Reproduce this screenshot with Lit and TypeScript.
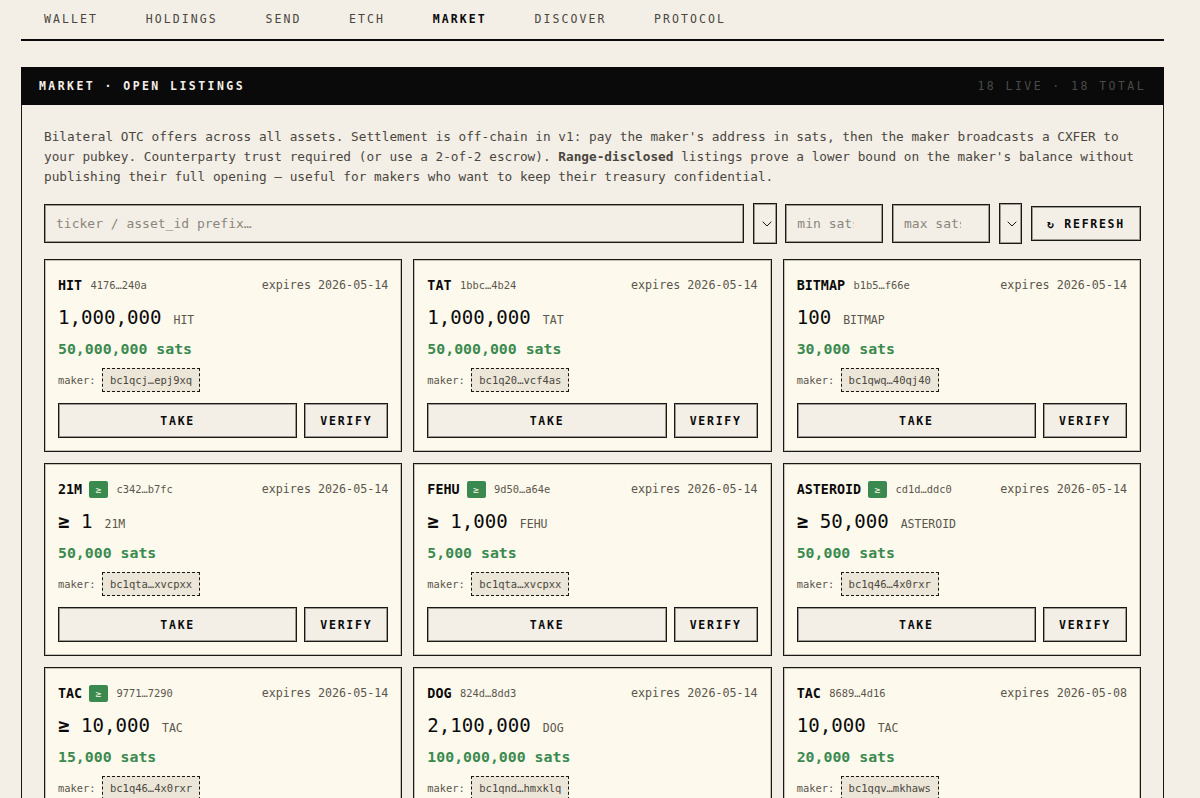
import { LitElement, html, css, nothing } from 'lit';
import { customElement } from 'lit/decorators.js';

const tabs = ['WALLET', 'HOLDINGS', 'SEND', 'ETCH', 'MARKET', 'DISCOVER', 'PROTOCOL'];

type Listing = {
  ticker: string;
  range?: boolean;
  id: string;
  expires: string;
  amount: string;
  sats: string;
  maker: string;
};

const listings: Listing[] = [
  { ticker: 'HIT', id: '4176…240a', expires: '2026-05-14', amount: '1,000,000', sats: '50,000,000', maker: 'bc1qcj…epj9xq' },
  { ticker: 'TAT', id: '1bbc…4b24', expires: '2026-05-14', amount: '1,000,000', sats: '50,000,000', maker: 'bc1q20…vcf4as' },
  { ticker: 'BITMAP', id: 'b1b5…f66e', expires: '2026-05-14', amount: '100', sats: '30,000', maker: 'bc1qwq…40qj40' },
  { ticker: '21M', range: true, id: 'c342…b7fc', expires: '2026-05-14', amount: '1', sats: '50,000', maker: 'bc1qta…xvcpxx' },
  { ticker: 'FEHU', range: true, id: '9d50…a64e', expires: '2026-05-14', amount: '1,000', sats: '5,000', maker: 'bc1qta…xvcpxx' },
  { ticker: 'ASTEROID', range: true, id: 'cd1d…ddc0', expires: '2026-05-14', amount: '50,000', sats: '50,000', maker: 'bc1q46…4x0rxr' },
  { ticker: 'TAC', range: true, id: '9771…7290', expires: '2026-05-14', amount: '10,000', sats: '15,000', maker: 'bc1q46…4x0rxr' },
  { ticker: 'DOG', id: '824d…8dd3', expires: '2026-05-14', amount: '2,100,000', sats: '100,000,000', maker: 'bc1qnd…hmxklq' },
  { ticker: 'TAC', id: '8689…4d16', expires: '2026-05-08', amount: '10,000', sats: '20,000', maker: 'bc1qqv…mkhaws' },
];

const chevron = html`<svg width="10" height="6" viewBox="0 0 10 6" fill="none" stroke="#1a1814" stroke-width="1"><path d="M.7 .7L5 5l4.3-4.3"/></svg>`;

@customElement('app-root')
export class AppRoot extends LitElement {
  static styles = css`
    :host {
      display: block;
      height: 100vh;
      overflow: hidden;
      box-sizing: border-box;
      padding: 0 36px 0 21px;
      background: #f3efe7;
      color: #0a0a0a;
      font-family: 'DejaVu Sans Mono', 'Liberation Mono', monospace;
    }
    * { box-sizing: border-box; }
    .tabs {
      display: flex;
      height: 41px;
      border-bottom: 2px solid #0a0a0a;
    }
    .tab {
      padding: 12px 23px 0 23px;
      margin-right: 1.67px;
      font-size: 11.5px;
      line-height: 14px;
      letter-spacing: 2.08px;
      color: #4a463e;
    }
    .tab.active { color: #0a0a0a; font-weight: 700; }
    .panel {
      margin-top: 26px;
      border: 1px solid #1a1814;
      border-top: 0;
    }
    .panel-head {
      display: flex;
      justify-content: space-between;
      align-items: center;
      height: 38px;
      margin: 0 -1px;
      padding: 0 18px;
      background: #0a0a0a;
      color: #f3efe7;
      font-size: 11.5px;
      letter-spacing: 2.44px;
    }
    .panel-head .title { font-weight: 700; }
    .panel-head .count { color: #4a4a48; }
    .panel-body { padding: 22px 22px 0 22px; }
    .intro {
      margin: 0;
      font-size: 12.75px;
      line-height: 20px;
      color: #4a463e;
    }
    .intro b { font-weight: 700; }
    .filters {
      display: flex;
      align-items: center;
      gap: 8.7px;
      margin-top: 16px;
    }
    input {
      height: 39px;
      padding: 0 11px;
      border: 1px solid #1a1814;
      box-shadow: inset 0 0 0 1px rgba(26, 24, 20, 0.4);
      border-radius: 0;
      background: #f3efe7;
      color: #0a0a0a;
      font: 13px 'DejaVu Sans Mono', monospace;
      outline: none;
    }
    input::placeholder { color: #8a867c; opacity: 1; }
    .search { flex: 1; min-width: 0; }
    .num { width: 98px; padding-right: 13px; }
    .select {
      display: flex;
      align-items: center;
      justify-content: flex-end;
      width: 23.6px;
      height: 41px;
      padding-right: 4px;
      border: 1px solid #1a1814;
      box-shadow: inset 0 0 0 1px rgba(26, 24, 20, 0.4);
    }
    button {
      border: 1px solid #1a1814;
      box-shadow: inset 0 0 0 1px rgba(26, 24, 20, 0.4);
      background: #f3efe7;
      color: #0a0a0a;
      font-family: 'DejaVu Sans Mono', monospace;
      font-weight: 700;
      font-size: 11.5px;
      letter-spacing: 1.73px;
      padding: 0;
    }
    .refresh { width: 110px; height: 35px; }
    .grid {
      display: grid;
      grid-template-columns: repeat(3, 1fr);
      gap: 11.5px 11px;
      margin-top: 15.4px;
    }
    .card {
      height: 192.5px;
      padding: 16px 13px 0 13px;
      border: 1px solid #1a1814;
      box-shadow: inset 0 0 0 1px rgba(26, 24, 20, 0.25);
      background: #fef9ed;
    }
    .head {
      display: flex;
      align-items: center;
      height: 18px;
      font-size: 11.7px;
      color: #5a564c;
    }
    .ticker {
      font-size: 13.4px;
      font-weight: 700;
      color: #0a0a0a;
    }
    .badge {
      display: flex;
      align-items: center;
      justify-content: center;
      width: 19px;
      height: 17px;
      margin-left: 7px;
      border-radius: 2px;
      background: #3a8a50;
      color: #fef9ed;
      font-size: 9.5px;
    }
    .id { margin-left: 8.4px; font-size: 10.4px; color: #5a564c; }
    .expires { margin-left: auto; }
    .amount {
      display: flex;
      align-items: baseline;
      margin-top: 11px;
      height: 26px;
      font-size: 19.1px;
      line-height: 26px;
      color: #0a0a0a;
    }
    .gte { font-weight: 700; }
    .unit { margin-left: 12px; font-size: 11.5px; color: #5a564c; }
    .sats {
      margin-top: 8px;
      height: 20px;
      font-size: 14.85px;
      line-height: 20px;
      font-weight: 700;
      color: #3a8a50;
    }
    .maker {
      display: flex;
      align-items: center;
      gap: 6.4px;
      margin-top: 9px;
      font-size: 10.4px;
      color: #5a564c;
    }
    .addr {
      padding: 0 7px;
      height: 24px;
      line-height: 22px;
      border: 1px dashed #1a1814;
      background: #ece6d8;
      font-size: 10.5px;
      color: #4a463e;
    }
    .actions {
      display: flex;
      gap: 7px;
      margin-top: 11px;
    }
    .actions button { height: 35px; }
    .take { flex: 1; }
    .verify { width: 84px; }
  `;

  renderCard(l: Listing) {
    return html`
      <div class="card">
        <div class="head">
          <span class="ticker">${l.ticker}</span>
          ${l.range ? html`<span class="badge">≥</span>` : nothing}
          <span class="id">${l.id}</span>
          <span class="expires">expires ${l.expires}</span>
        </div>
        <div class="amount">
          <span>${l.range ? html`<span class="gte">≥</span> ` : nothing}${l.amount}</span>
          <span class="unit">${l.ticker}</span>
        </div>
        <div class="sats">${l.sats} sats</div>
        <div class="maker">maker: <span class="addr">${l.maker}</span></div>
        <div class="actions">
          <button class="take">TAKE</button>
          <button class="verify">VERIFY</button>
        </div>
      </div>
    `;
  }

  render() {
    return html`
      <nav class="tabs">
        ${tabs.map((t) => html`<div class="tab ${t === 'MARKET' ? 'active' : ''}">${t}</div>`)}
      </nav>
      <section class="panel">
        <header class="panel-head">
          <span class="title">MARKET · OPEN LISTINGS</span>
          <span class="count">18 LIVE · 18 TOTAL</span>
        </header>
        <div class="panel-body">
          <p class="intro">
            Bilateral OTC offers across all assets. Settlement is off-chain in v1: pay the maker's address in sats, then the maker broadcasts a CXFER to
            your pubkey. Counterparty trust required (or use a 2-of-2 escrow). <b>Range-disclosed</b> listings prove a lower bound on the maker's balance without
            publishing their full opening — useful for makers who want to keep their treasury confidential.
          </p>
          <div class="filters">
            <input class="search" placeholder="ticker / asset_id prefix…" />
            <div class="select">${chevron}</div>
            <input class="num" type="number" placeholder="min sats" />
            <input class="num" type="number" placeholder="max sats" />
            <div class="select">${chevron}</div>
            <button class="refresh">↻ REFRESH</button>
          </div>
          <div class="grid">${listings.map((l) => this.renderCard(l))}</div>
        </div>
      </section>
    `;
  }
}
